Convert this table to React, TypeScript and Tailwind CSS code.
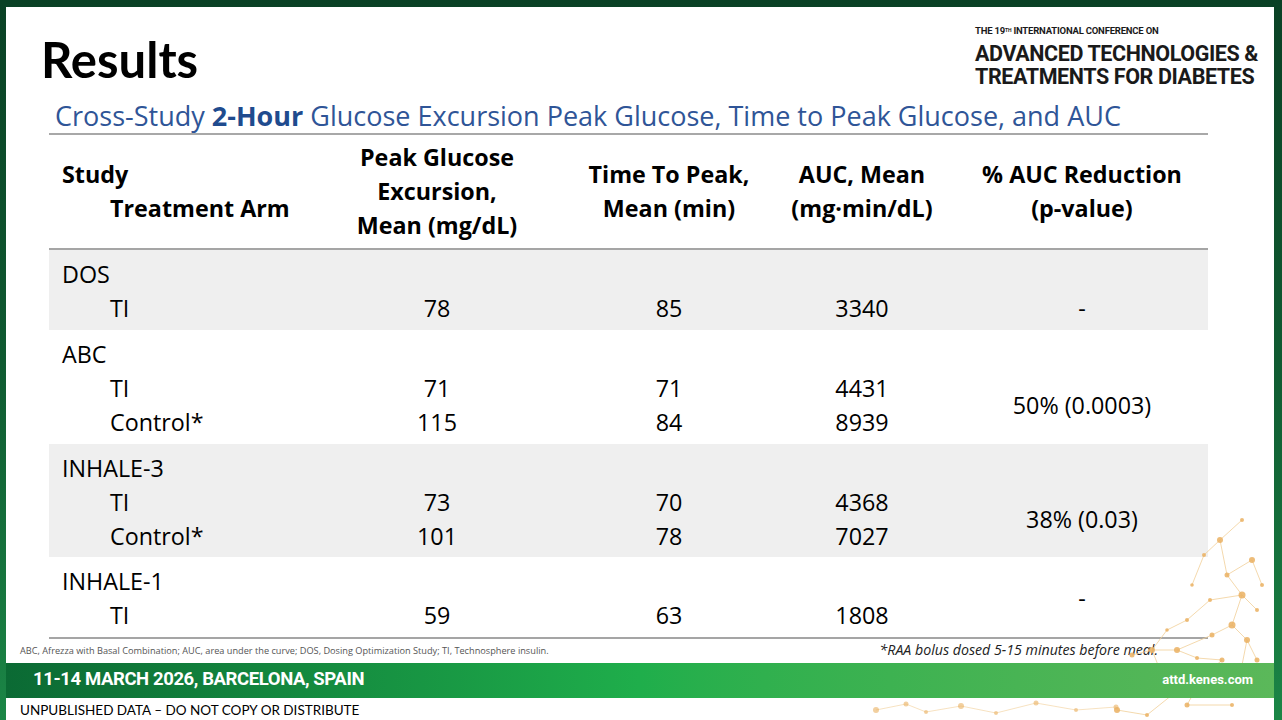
import React from 'react';

type Arm = { name: string; peak: string; time: string; auc: string };
type Group = { study: string; arms: Arm[]; reduction: string; span: 'arms' | 'all'; shaded: boolean };

const groups: Group[] = [
  { study: 'DOS', arms: [{ name: 'TI', peak: '78', time: '85', auc: '3340' }], reduction: '-', span: 'arms', shaded: true },
  {
    study: 'ABC',
    arms: [
      { name: 'TI', peak: '71', time: '71', auc: '4431' },
      { name: 'Control*', peak: '115', time: '84', auc: '8939' },
    ],
    reduction: '50% (0.0003)',
    span: 'arms',
    shaded: false,
  },
  {
    study: 'INHALE-3',
    arms: [
      { name: 'TI', peak: '73', time: '70', auc: '4368' },
      { name: 'Control*', peak: '101', time: '78', auc: '7027' },
    ],
    reduction: '38% (0.03)',
    span: 'arms',
    shaded: true,
  },
  { study: 'INHALE-1', arms: [{ name: 'TI', peak: '59', time: '63', auc: '1808' }], reduction: '-', span: 'all', shaded: false },
];

const Line: React.FC<{ children?: React.ReactNode; className?: string }> = ({ children, className = '' }) => (
  <div className={`h-[34px] flex items-center whitespace-nowrap ${className}`}>{children}</div>
);

// orange network in the bottom-right corner
const nodes: [number, number, number][] = [
  [150, 20, 2], [128, 40, 3], [112, 55, 2], [160, 60, 3], [135, 75, 2.5], [150, 95, 3.5], [118, 100, 2],
  [165, 110, 2], [95, 120, 2], [140, 125, 3.5], [120, 135, 2.5], [155, 140, 3], [85, 150, 3], [105, 158, 2],
  [130, 160, 2.5], [60, 150, 3], [150, 165, 2], [165, 160, 2.5], [40, 155, 2.5], [70, 175, 2], [110, 178, 2],
  [25, 210, 3], [55, 215, 2], [95, 205, 2.5], [140, 205, 2], [80, 195, 2], [170, 85, 2], [100, 85, 1.8],
  [75, 130, 1.8], [160, 190, 2],
];
const links: [number, number][] = [
  [0, 1], [1, 2], [1, 4], [3, 4], [4, 5], [5, 6], [5, 7], [6, 8], [5, 9], [9, 10], [9, 11], [10, 12], [12, 13],
  [13, 14], [11, 16], [11, 17], [12, 15], [15, 18], [15, 19], [14, 20], [19, 25], [25, 22], [22, 21], [20, 23], [23, 24],
  [3, 26], [2, 27], [8, 28], [28, 15], [16, 29],
];

const Molecules: React.FC = () => (
  <svg width="180" height="220" viewBox="0 0 180 220" className="absolute right-[2px] bottom-0 pointer-events-none">
    {links.map(([a, b], i) => (
      <line key={i} x1={nodes[a][0]} y1={nodes[a][1]} x2={nodes[b][0]} y2={nodes[b][1]} stroke="#f1cf98" strokeWidth="0.8" />
    ))}
    {nodes.map(([x, y, r], i) => (
      <circle key={i} cx={x} cy={y} r={r} fill="#eab061" opacity={0.85} />
    ))}
  </svg>
);

// faint dots that show below the green band
const lowDots: [number, number, number][] = [
  [10, 12, 3], [40, 6, 2.5], [60, 14, 2], [95, 8, 3], [130, 15, 2], [170, 5, 2.5], [210, 12, 2], [250, 9, 2.5],
];

const LowDots: React.FC = () => (
  <svg width="270" height="22" viewBox="0 0 270 22" className="absolute left-[860px] bottom-0 pointer-events-none">
    <polyline points="10,12 40,6 60,14 95,8 130,15 170,5 210,12 250,9" fill="none" stroke="#f3d6a6" strokeWidth="0.7" />
    {lowDots.map(([x, y, r], i) => (
      <circle key={i} cx={x} cy={y} r={r} fill="#eab061" opacity={0.6} />
    ))}
  </svg>
);

export default function App() {
  return (
    <div className="w-[1282px] h-[720px] overflow-hidden bg-gradient-to-b from-[#0a4125] via-[#0f5a31] to-[#1b8646] pt-[7px] pl-[6px] pr-[8px]">
      <div className="relative w-full h-[713px] bg-white flex flex-col" style={{ fontFamily: '"Open Sans", Lato, sans-serif' }}>
        <Molecules />
        <LowDots />
        {/* Title row */}
        <div className="h-[93px] flex justify-between">
          <h1 className="pl-[35px] pt-[28px] text-[49px] leading-none font-bold text-black" style={{ fontFamily: 'Lato, sans-serif' }}>
            Results
          </h1>
          <div className="pt-[19px] pr-[16px] text-[#1a1a1a] font-bold" style={{ fontFamily: 'Roboto, sans-serif' }}>
            <div className="text-[9.5px] leading-[10px] tracking-[-0.2px]">
              THE 19<sup className="text-[5px]">TH</sup> INTERNATIONAL CONFERENCE ON
            </div>
            <div className="mt-[6px] text-[21.5px] leading-[23px] tracking-[-0.4px]">ADVANCED TECHNOLOGIES &amp;</div>
            <div className="text-[21.5px] leading-[23px] tracking-[-0.4px]">TREATMENTS FOR DIABETES</div>
          </div>
        </div>

        {/* Subtitle */}
        <div className="h-[35px] pl-[49px] pt-[1px] text-[27px] leading-[34px] text-[#2f5597] whitespace-nowrap">
          Cross-Study <span className="font-bold text-[#1f4b8e]">2-Hour</span> Glucose Excursion Peak Glucose, Time to Peak Glucose, and AUC
        </div>

        {/* Table */}
        <div className="ml-[43px] w-[1159px] border-t-2 border-[#a8a8a8] text-[23.3px] text-black">
          <div className="h-[115px] flex items-center font-bold text-[23.3px] border-b-2 border-[#a5a5a5]">
            <div className="w-[281px] pl-[13px]">
              <Line>Study</Line>
              <Line className="pl-[48px]">Treatment Arm</Line>
            </div>
            <div className="w-[214px]">
              <Line className="justify-center">Peak Glucose</Line>
              <Line className="justify-center">Excursion,</Line>
              <Line className="justify-center">Mean (mg/dL)</Line>
            </div>
            <div className="w-[250px]">
              <Line className="justify-center">Time To Peak,</Line>
              <Line className="justify-center">Mean (min)</Line>
            </div>
            <div className="w-[136px]">
              <Line className="justify-center">AUC, Mean</Line>
              <Line className="justify-center">(mg·min/dL)</Line>
            </div>
            <div className="w-[278px] pl-[26px]">
              <Line className="justify-center">% AUC Reduction</Line>
              <Line className="justify-center">(p-value)</Line>
            </div>
          </div>

          {groups.map((g) => (
            <div key={g.study} className={`flex pt-[7px] pb-[4.5px] ${g.shaded ? 'bg-[#efefef]' : 'bg-white'}`}>
              <div className="w-[281px] pl-[13px]">
                <Line>{g.study}</Line>
                {g.arms.map((a) => (
                  <Line key={a.name} className="pl-[48px]">{a.name}</Line>
                ))}
              </div>
              <div className="w-[214px]">
                <Line />
                {g.arms.map((a) => (
                  <Line key={a.name} className="justify-center">{a.peak}</Line>
                ))}
              </div>
              <div className="w-[250px]">
                <Line />
                {g.arms.map((a) => (
                  <Line key={a.name} className="justify-center">{a.time}</Line>
                ))}
              </div>
              <div className="w-[136px]">
                <Line />
                {g.arms.map((a) => (
                  <Line key={a.name} className="justify-center">{a.auc}</Line>
                ))}
              </div>
              <div className="w-[278px] pl-[26px] flex flex-col">
                {g.span === 'arms' && <Line />}
                <div className="flex-1 flex items-center justify-center">{g.reduction}</div>
              </div>
            </div>
          ))}
          <div className="border-t-2 border-[#a5a5a5]" />
        </div>

        {/* Footnotes */}
        <div className="h-[22px] flex items-center justify-between pl-[14px] pr-[116px]">
          <span className="text-[9.2px] text-[#555] mt-[3px]">
            ABC, Afrezza with Basal Combination; AUC, area under the curve; DOS, Dosing Optimization Study; TI, Technosphere insulin.
          </span>
          <span className="text-[14.2px] italic text-[#222]">*RAA bolus dosed 5-15 minutes before meal.</span>
        </div>

        {/* Green band */}
        <div className="relative mt-[2px] h-[36px] flex items-center justify-between pl-[27px] pr-[21px] bg-gradient-to-r from-[#0b6a34] via-[#1fae4b] to-[#5bb85a] text-white font-bold" style={{ fontFamily: 'Roboto, sans-serif' }}>
          <span className="text-[18.5px] tracking-[-0.4px]">11-14 MARCH 2026, BARCELONA, SPAIN</span>
          <span className="text-[13px]">attd.kenes.com</span>
        </div>

        <div className="relative pl-[14px] pt-[2px] text-[13.5px] text-black" style={{ fontFamily: 'Lato, sans-serif' }}>
          UNPUBLISHED DATA – DO NOT COPY OR DISTRIBUTE
        </div>
      </div>
    </div>
  );
}
